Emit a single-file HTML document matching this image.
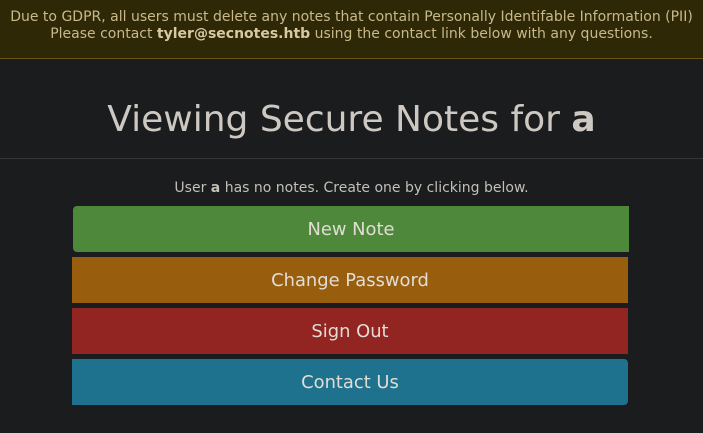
<!DOCTYPE html>
<html><head><style>
body{margin:0;background:#1b1c1e;font-family:"DejaVu Sans","Liberation Sans",sans-serif;width:703px;height:433px;overflow:hidden;}
.banner{position:absolute;left:0;top:0;width:703px;height:59px;background:#2e2807;border-bottom:1px solid #6b5316;color:#c9b98a;font-size:14px;text-align:center;line-height:17px;box-sizing:border-box;padding-top:9px;}
.banner b{color:#d9c9a0}
h1{position:absolute;top:98px;left:0;width:703px;margin:0;text-align:center;font-weight:normal;font-size:36px;color:#cdc8c1;line-height:44px;}
.hr{position:absolute;top:158px;left:0;width:703px;height:1px;background:#35373a}
.sub{position:absolute;top:180px;left:0;width:703px;text-align:center;font-size:14px;color:#c3bfb9}
.btn{position:absolute;height:46px;width:556px;line-height:47px;text-align:center;color:#e2ddd4;font-size:17.9px}
</style></head><body>
<div class="banner">Due to GDPR, all users must delete any notes that contain Personally Identifable Information (PII)<br>Please contact <b>tyler@secnotes.htb</b> using the contact link below with any questions.</div>
<h1>Viewing Secure Notes for <b>a</b></h1>
<div class="hr"></div>
<div class="sub">User <b>a</b> has no notes. Create one by clicking below.</div>
<div class="btn" style="left:73px;top:206px;background:#4e883a;border-radius:4px 0 0 4px">New Note</div>
<div class="btn" style="left:72px;top:257px;background:#985e0e">Change Password</div>
<div class="btn" style="left:72px;top:308px;background:#922422">Sign Out</div>
<div class="btn" style="left:72px;top:359px;background:#1e728d;border-radius:0 4px 4px 0">Contact Us</div>
</body></html>
